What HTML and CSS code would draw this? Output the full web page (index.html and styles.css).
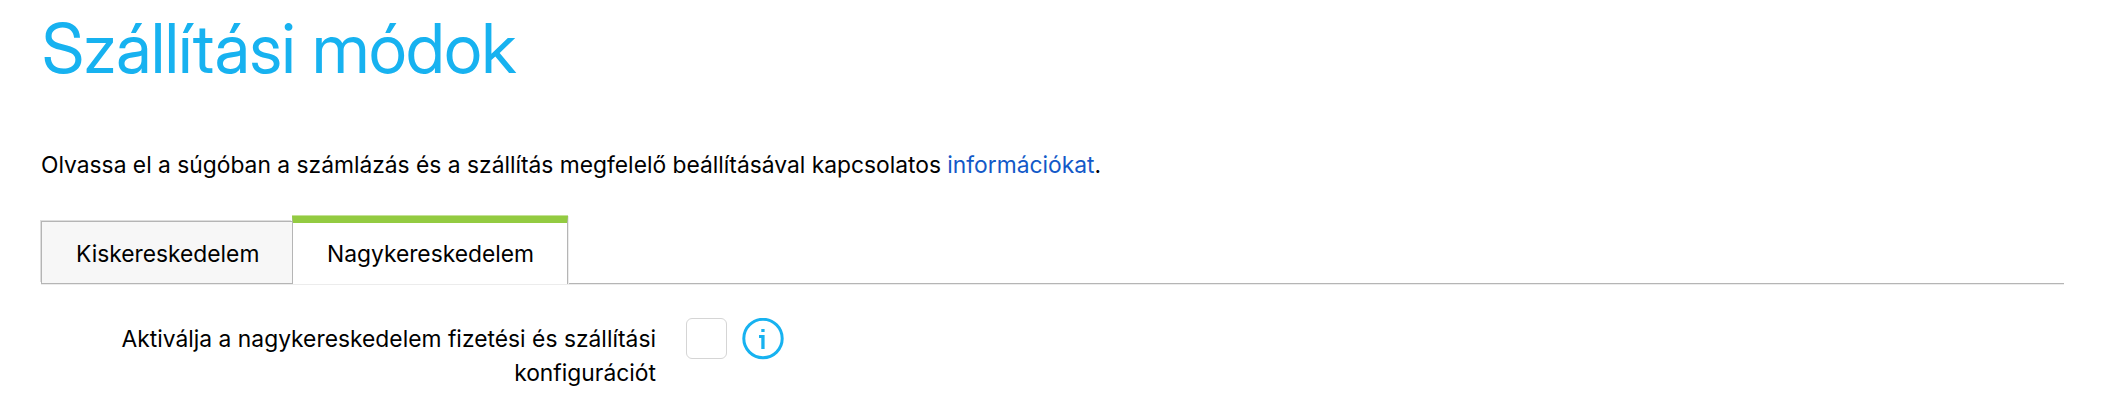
FILE: index.html
```
<!DOCTYPE html>
<html lang="hu">
<head>
    <meta charset="UTF-8">
    <meta name="viewport" content="width=device-width, initial-scale=1.0">
    <title>Szállítási módok</title>
    <link rel="stylesheet" href="styles.css">
</head>
<body>
    <h1>Szállítási módok</h1>
    <p class="intro">Olvassa el a súgóban a számlázás és a szállítás megfelelő beállításával kapcsolatos <a href="#">információkat</a>.</p>
    <div class="tabs">
        <a class="tab" href="#">Kiskereskedelem</a>
        <a class="tab active" href="#">Nagykereskedelem</a>
    </div>
    <div class="form-row">
        <label for="wholesale">Aktiválja a nagykereskedelem fizetési és szállítási konfigurációt</label>
        <input type="checkbox" id="wholesale">
        <svg class="info" viewBox="0 0 42 42">
            <circle cx="21" cy="20.500" r="19.200" />
            <path d="M19.300 11h3.300v3h-3.300zM17 17h5.600v14h-3.300V20H17z" />
        </svg>
    </div>
</body>
</html>
```

FILE: styles.css
```
body {
    margin: 0;
    padding: 0 41px;
    font-family: 'Inter', sans-serif;
    font-size: 22.8px;
    line-height: 34px;
    color: #000;
    background: #fff;
}

h1 {
    margin: 0;
    padding: 7px 0 0 1px;
    font-family: 'Inter Display', 'Inter', sans-serif;
    font-size: 68.4px;
    line-height: 82px;
    font-weight: 400;
    letter-spacing: -0.4px;
    color: #17b2f0;
}

.intro {
    margin: 59px 0 33px;
}

.intro a {
    color: #1259c8;
    text-decoration: none;
}

.tabs {
    display: flex;
    align-items: flex-end;
    height: 68px;
    border-bottom: 1px solid #b5b5b5;
    box-shadow: 0 1px #ececec;
}

.tab {
    box-sizing: border-box;
    width: 251px;
    height: 62px;
    padding: 15px 0 0 34px;
    border-left: 1px solid #b5b5b5;
    border-top: 1px solid #b5b5b5;
    box-shadow: -1px -1px #dedede;
    background: #f7f7f7;
    color: #000;
    text-decoration: none;
}

.tab.active {
    width: 276px;
    height: 68px;
    margin-bottom: -1px;
    padding-top: 14px;
    border-right: 1px solid #b5b5b5;
    border-top: 7px solid #93cb41;
    box-shadow: 1px 0 #ececec, 0 -1px #c4e295;
    background: #fff;
}

.form-row {
    display: flex;
    padding-top: 34px;
}

.form-row label {
    width: 615px;
    padding-top: 4px;
    text-align: right;
    letter-spacing: 0.02px;
}

.form-row input {
    appearance: none;
    box-sizing: border-box;
    width: 41px;
    height: 41px;
    margin: 0 15px 0 30px;
    border: 1.5px solid #d5d5d5;
    border-radius: 6px;
}

.info {
    width: 42px;
    height: 42px;
    fill: #17b2f0;
}

.info circle {
    fill: none;
    stroke: #17b2f0;
    stroke-width: 3;
}
```
